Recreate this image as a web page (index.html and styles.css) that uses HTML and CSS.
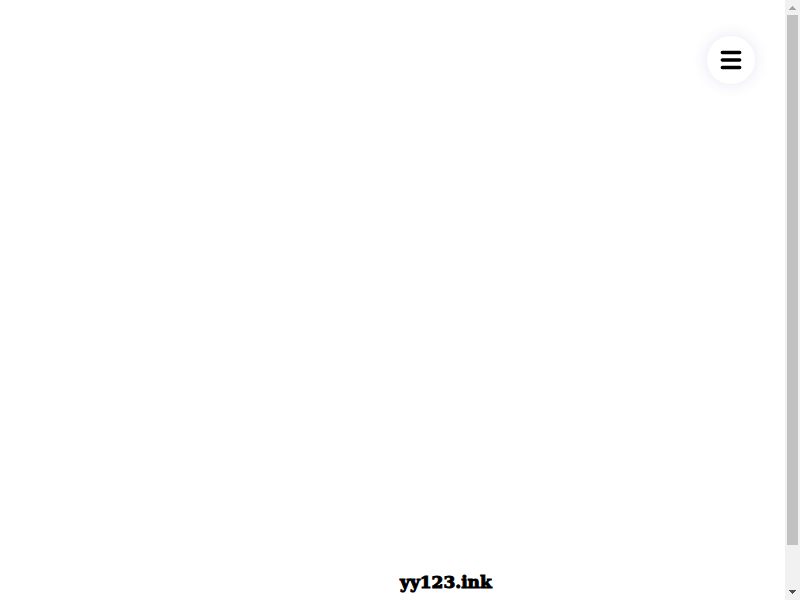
FILE: index.html
```html
<!DOCTYPE html>
<html lang="en">
<head>
    <meta charset="UTF-8">
    <meta name="viewport" content="width=device-width, initial-scale=1.0">
    <title>yy123.ink</title>
    <link rel="stylesheet" href="styles.css">
</head>
<body>
    <div class="page">
        <header class="header">
            <button type="button" class="menu-button" aria-label="Menu">
                <svg width="22" height="20" viewBox="0 0 22 20" fill="none" stroke="#000" stroke-width="3.6" stroke-linecap="round">
                    <path d="M2.4 2.5H19.6M2.4 10H19.6M2.4 17.5H19.6"/>
                </svg>
            </button>
        </header>
        <footer class="footer">yy123.ink</footer>
    </div>
    <div class="scrollbar" aria-hidden="true">
        <svg class="arrow" width="15" height="15" viewBox="0 0 15 15" shape-rendering="crispEdges">
            <path fill="#a3a3a3" d="M7 6h1v1h1v1h1v1h1v1H4V9h1V8h1V7h1z"/>
        </svg>
        <div class="track">
            <div class="thumb"></div>
        </div>
        <svg class="arrow" width="15" height="15" viewBox="0 0 15 15" shape-rendering="crispEdges">
            <path fill="#505050" d="M4 5h7v1h-1v1H9v1H8v1H7V8H6V7H5V6H4z"/>
        </svg>
    </div>
</body>
</html>
```

FILE: styles.css
```css
body {
    margin: 0;
    min-height: 100vh;
    display: flex;
    background-color: #fff;
}

.page {
    flex: 1;
    display: flex;
    flex-direction: column;
    justify-content: space-between;
}

.header {
    display: flex;
    justify-content: flex-end;
    padding: 36px 30px;
}

.menu-button {
    display: flex;
    align-items: center;
    justify-content: center;
    width: 48px;
    height: 48px;
    padding: 0;
    border: none;
    border-radius: 50%;
    background-color: #fff;
    box-shadow: 0 0 16px rgba(60, 30, 160, 0.12);
    cursor: pointer;
}

.footer {
    padding: 0 0 6px 50vw;
    color: #000;
    font-family: 'DejaVu Serif', serif;
    font-size: 17px;
    font-weight: bold;
    line-height: 24px;
    -webkit-text-stroke: 1px #000;
}

.scrollbar {
    display: flex;
    flex-direction: column;
    width: 15px;
    background-color: #f1f1f1;
}

.arrow {
    display: block;
}

.track {
    flex: 1;
    padding: 0 2px;
}

.thumb {
    height: 93%;
    background-color: #c1c1c1;
}
```
